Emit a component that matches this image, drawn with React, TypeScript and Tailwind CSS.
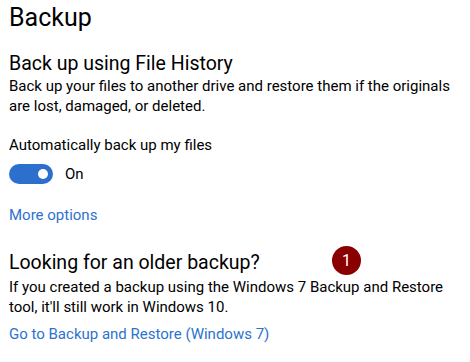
export default function App() {
  return (
    <div className="relative w-[470px] h-[362px] bg-white text-black font-['Roboto',sans-serif] pl-[9px] overflow-hidden">
      <h1 className="text-[25px] leading-[32px] mt-[2px]">Backup</h1>

      <h2 className="text-[19.5px] leading-[24px] mt-[18px]">Back up using File History</h2>
      <p className="text-[15px] leading-[20px] pr-[10px]">
        Back up your files to another drive and restore them if the originals are lost, damaged, or deleted.
      </p>

      <p className="text-[15px] leading-[20px] mt-[19px]">Automatically back up my files</p>
      <div className="flex items-center gap-3 mt-[9px]">
        <div className="relative w-[44px] h-[20px] rounded-full bg-[#2c6fcd]">
          <span className="absolute right-[5px] top-[5px] w-[10px] h-[10px] rounded-full bg-white" />
        </div>
        <span className="text-[15px] leading-[20px]">On</span>
      </div>

      <a className="block text-[15px] leading-[20px] mt-[21px] text-[#2b73cf]">More options</a>

      <h2 className="text-[19.5px] leading-[24px] mt-[26px]">Looking for an older backup?</h2>
      <p className="text-[15px] leading-[20px] mt-[2px] pr-[10px]">
        If you created a backup using the Windows 7 Backup and Restore tool, it'll still work in Windows 10.
      </p>
      <a className="block text-[15px] leading-[20px] mt-[7px] text-[#2b73cf]">Go to Backup and Restore (Windows 7)</a>

      {/* callout marker */}
      <div className="absolute left-[332px] top-[246px] w-[29px] h-[29px] rounded-full bg-[#8a0000] flex items-center justify-center">
        <span className="text-white text-[16px] leading-none">1</span>
      </div>
    </div>
  )
}
